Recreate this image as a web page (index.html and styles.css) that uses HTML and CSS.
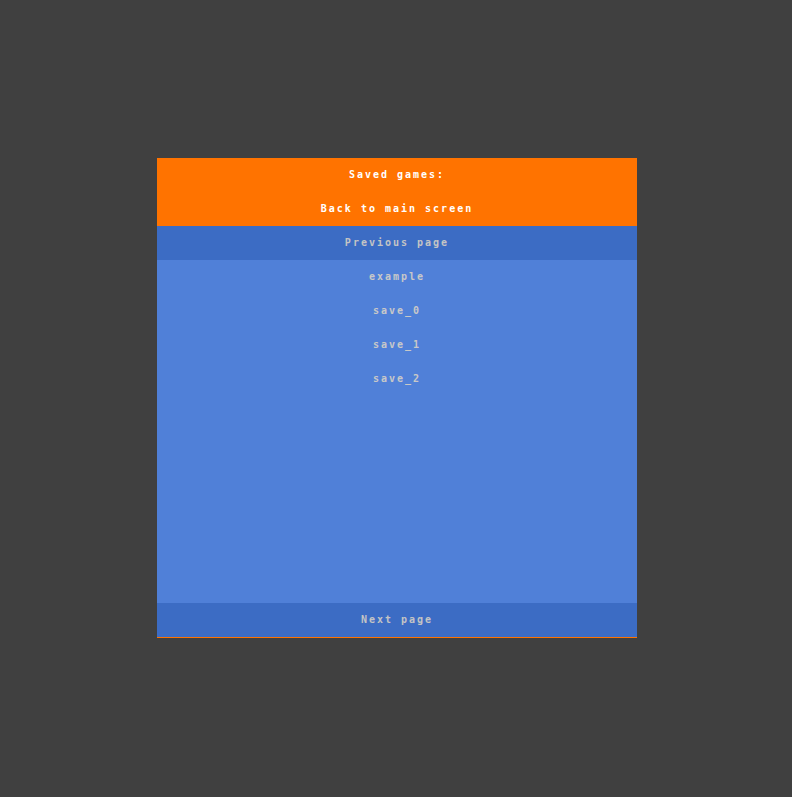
FILE: index.html
```html
<!DOCTYPE html>
<html>
<head>
<meta charset="utf-8">
<link rel="stylesheet" href="styles.css">
</head>
<body>
<div class="stage">
  <div class="panel">
    <div class="header">
      <div class="row title">Saved games:</div>
      <div class="row title">Back to main screen</div>
    </div>
    <div class="row nav">Previous page</div>
    <div class="list">
      <div class="row item">example</div>
      <div class="row item">save_0</div>
      <div class="row item">save_1</div>
      <div class="row item">save_2</div>
    </div>
    <div class="row nav">Next page</div>
    <div class="edge"></div>
  </div>
</div>
</body>
</html>
```
FILE: styles.css
```css
html, body {
  margin: 0;
  padding: 0;
  background: #404040;
}
.stage {
  width: 792px;
  height: 797px;
  display: flex;
  justify-content: center;
  padding-top: 158px;
  box-sizing: border-box;
}
.panel {
  width: 480px;
  height: 480px;
  display: flex;
  flex-direction: column;
  margin-left: 2px;
}
.header {
  background: #ff7300;
}
.row {
  height: 34px;
  flex: none;
  display: flex;
  align-items: center;
  justify-content: center;
  font-family: "DejaVu Sans Mono", monospace;
  font-size: 10px;
  letter-spacing: 2px;
  padding-bottom: 2px;
  box-sizing: border-box;
}
.title {
  color: #ffffff;
  font-weight: bold;
}
.nav {
  background: #3c6cc4;
  color: #c4c4c4;
  font-weight: bold;
}
.list {
  flex: 1;
  background: #5080d8;
}
.item {
  color: #c8c8c8;
  font-weight: bold;
}
.edge {
  height: 1px;
  flex: none;
  background: #ff7300;
}
```
